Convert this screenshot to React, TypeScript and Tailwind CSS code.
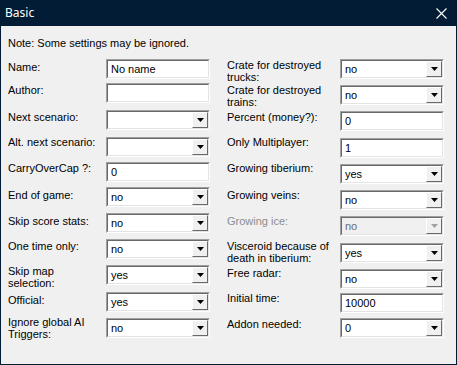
import React from "react";

type Field = { kind: "text" | "combo"; value: string; disabled?: boolean };
type Row = { label: React.ReactNode; lt: string; mt: string; field: Field };

// field tops are not on a fixed grid in the dialog, so every row carries its own spacing
const leftRows: Row[] = [
    { label: "Name:", lt: "mt-[2px]", mt: "mt-0", field: { kind: "text", value: "No name" } },
    { label: "Author:", lt: "mt-[1px]", mt: "mt-[4px]", field: { kind: "text", value: "" } },
    { label: "Next scenario:", lt: "mt-[1px]", mt: "mt-[7px]", field: { kind: "combo", value: "" } },
    { label: "Alt. next scenario:", lt: "-mt-[1px]", mt: "mt-[7px]", field: { kind: "combo", value: "" } },
    { label: "CarryOverCap ?:", lt: "mt-0", mt: "mt-[5px]", field: { kind: "text", value: "0" } },
    { label: "End of game:", lt: "mt-[2px]", mt: "mt-[5px]", field: { kind: "combo", value: "no" } },
    { label: "Skip score stats:", lt: "mt-[2px]", mt: "mt-[6px]", field: { kind: "combo", value: "no" } },
    { label: "One time only:", lt: "mt-[1px]", mt: "mt-[6px]", field: { kind: "combo", value: "no" } },
    { label: <>Skip map<br />selection:</>, lt: "mt-0", mt: "mt-[6px]", field: { kind: "combo", value: "yes" } },
    { label: "Official:", lt: "mt-[2px]", mt: "mt-[7px]", field: { kind: "combo", value: "yes" } },
    { label: <>Ignore global AI<br />Triggers:</>, lt: "-mt-[2px]", mt: "mt-[6px]", field: { kind: "combo", value: "no" } },
];

const rightRows: Row[] = [
    { label: <>Crate for destroyed<br />trucks:</>, lt: "mt-0", mt: "mt-0", field: { kind: "combo", value: "no" } },
    { label: <>Crate for destroyed<br />trains:</>, lt: "-mt-[1px]", mt: "mt-[6px]", field: { kind: "combo", value: "no" } },
    { label: "Percent (money?):", lt: "mt-0", mt: "mt-[6px]", field: { kind: "text", value: "0" } },
    { label: "Only Multiplayer:", lt: "-mt-[2px]", mt: "mt-[7px]", field: { kind: "text", value: "1" } },
    { label: "Growing tiberium:", lt: "-mt-[2px]", mt: "mt-[6px]", field: { kind: "combo", value: "yes" } },
    { label: "Growing veins:", lt: "-mt-[1px]", mt: "mt-[6px]", field: { kind: "combo", value: "no" } },
    { label: "Growing ice:", lt: "-mt-[1px]", mt: "mt-[6px]", field: { kind: "combo", value: "no", disabled: true } },
    { label: <>Visceroid because of<br />death in tiberium:</>, lt: "-mt-[3px]", mt: "mt-[7px]", field: { kind: "combo", value: "yes" } },
    { label: "Free radar:", lt: "-mt-[2px]", mt: "mt-[6px]", field: { kind: "combo", value: "no" } },
    { label: "Initial time:", lt: "-mt-[1px]", mt: "mt-[4px]", field: { kind: "text", value: "10000" } },
    { label: "Addon needed:", lt: "mt-0", mt: "mt-[5px]", field: { kind: "combo", value: "0" } },
];

const Sunken = ({ children, disabled }: { children: React.ReactNode; disabled?: boolean }) => (
    <div className="h-[20px] w-[104px] shrink-0 border border-b-white border-l-[#a0a0a0] border-r-white border-t-[#a0a0a0]">
        <div
            className={`flex h-full w-full items-stretch border border-b-[#e3e3e3] border-l-[#696969] border-r-[#e3e3e3] border-t-[#696969] ${
                disabled ? "bg-[#f0f0f0]" : "bg-white"
            }`}
        >
            {children}
        </div>
    </div>
);

const FieldBox = ({ field }: { field: Field }) => (
    <Sunken disabled={field.disabled}>
        <span
            className={`flex-1 pl-[3px] leading-[16px] ${field.disabled ? "text-[#6d6d6d]" : "text-black"}`}
        >
            {field.value}
        </span>
        {field.kind === "combo" && (
            <div className="flex w-[16px] items-center justify-center border border-b-[#696969] border-l-white border-r-[#696969] border-t-white bg-[#f0f0f0]">
                <svg width="7" height="4" viewBox="0 0 7 4">
                    <path d="M0 0h7L3.5 4z" fill={field.disabled ? "#a0a0a0" : "#000"} />
                </svg>
            </div>
        )}
    </Sunken>
);

const Column = ({ rows, labelW }: { rows: Row[]; labelW: string }) => (
    <div className="flex flex-col">
        {rows.map((r, i) => (
            <div key={i} className={`flex h-[20px] items-start ${r.mt}`}>
                <div
                    className={`${labelW} ${r.lt} shrink-0 leading-[12px] ${
                        r.field.disabled ? "text-[#8d8d8d]" : "text-black"
                    }`}
                >
                    {r.label}
                </div>
                <FieldBox field={r.field} />
            </div>
        ))}
    </div>
);

export default function App() {
    return (
        <div
            className="flex h-[365px] w-[457px] flex-col bg-[#011c34] text-[11px]"
            style={{ fontFamily: '"Liberation Sans", Arial, sans-serif' }}
        >
            <div className="flex h-[26px] shrink-0 items-center justify-between pl-[5px] pr-[10px]">
                <span className="text-[12px] text-white" style={{ fontFamily: '"Noto Sans", sans-serif' }}>
                    Basic
                </span>
                <svg width="11" height="11" viewBox="0 0 11 11">
                    <path d="M0.5 0.5l10 10M10.5 0.5l-10 10" stroke="#fff" strokeWidth="1.1" />
                </svg>
            </div>
            <div className="mx-[1px] mb-[1px] flex-1 bg-[#f0f0f0] pl-[7px] pt-[11px]">
                <div className="leading-[12px] text-black">Note: Some settings may be ignored.</div>
                <div className="mt-[10px] flex gap-[17px]">
                    <Column rows={leftRows} labelW="w-[98px]" />
                    <Column rows={rightRows} labelW="w-[113px]" />
                </div>
            </div>
        </div>
    );
}
